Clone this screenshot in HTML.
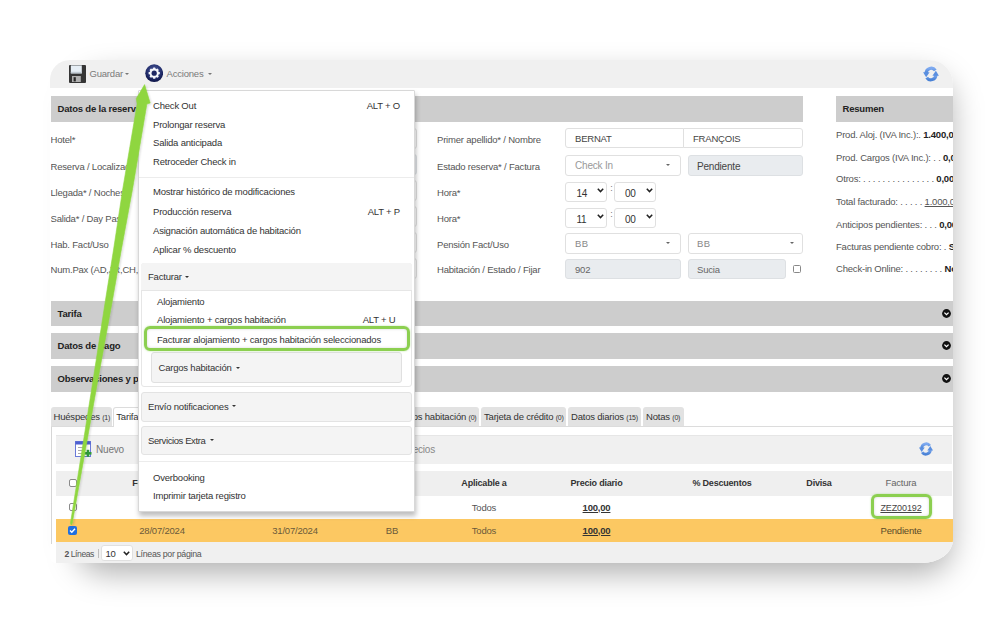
<!DOCTYPE html><html><head><meta charset="utf-8"><style>
*{margin:0;padding:0;box-sizing:border-box}
html,body{width:1000px;height:644px;overflow:hidden;background:#fff;font-family:"Liberation Sans",sans-serif;}
.t{position:absolute;white-space:nowrap;font-size:9.5px;line-height:12px;color:#3a3a3a;letter-spacing:-0.2px}
.r{position:absolute}
.b{font-weight:bold;color:#222}
.g{color:#8a8a8a}
.inp{border:1px solid #e0e0e0;border-radius:3px;background:#fff}
.dis{background:#e9ecef;border-color:#dde0e3}
.hdr{background:#cdcdcd}
.menu{background:#fff;border:1px solid #d8d8d8;border-radius:1px;box-shadow:1px 4px 5px rgba(0,0,0,.26)}
.sec{background:#f4f4f4;border:1px solid #e3e3e3;border-radius:3px}
.cb{border:1px solid #8a8a8a;border-radius:2px;background:#fff}
</style></head><body>
<div class="r" style="left:76px;top:75px;width:876px;height:499px;background:rgba(0,0,0,0.3);filter:blur(15px);border-radius:30px"></div>
<div class="r" style="left:50px;top:60px;width:903px;height:503px;background:#fff;border-radius:20px 24px 31px 6px / 20px 24px 23px 6px;overflow:hidden">
</div>
<div class="r" style="left:50px;top:60px;width:903px;height:503px;border-radius:20px 24px 31px 6px / 20px 24px 23px 6px;overflow:hidden">
<div class="r" style="left:-50px;top:-60px;width:1000px;height:644px">
<div class="r " style="left:50.0px;top:58.0px;width:903.0px;height:30.4px;background:#f0f0f0"></div>
<svg class="r" style="left:69px;top:64.8px" width="17" height="18" viewBox="0 0 17 18">
<rect x="0" y="0" width="17" height="18" rx="1" fill="#353535"/>
<rect x="1.8" y="0.4" width="11" height="8" fill="#e6eef5"/>
<rect x="1.8" y="6.8" width="11" height="1.6" fill="#c2ccd4"/>
<rect x="3" y="11" width="8.8" height="6" fill="#b0b0b0"/>
<rect x="4.6" y="12.2" width="2.2" height="4.2" fill="#262626"/>
</svg>
<div class="t g" style="top:67.5px;left:89.5px;color:#7a7a7a">Guardar</div>
<div class="r" style="left:124.5px;top:72.5px;width:0;height:0;border-left:2px solid transparent;border-right:2px solid transparent;border-top:2.5px solid #777"></div>
<svg class="r" style="left:144.5px;top:64.2px" width="18.4" height="18.4" viewBox="0 0 19 19">
<defs><radialGradient id="gg" cx="50%" cy="35%" r="65%"><stop offset="0" stop-color="#4a5796"/><stop offset=".6" stop-color="#263271"/><stop offset="1" stop-color="#0b1245"/></radialGradient></defs>
<circle cx="9.5" cy="9.5" r="9.2" fill="url(#gg)"/>
<g fill="#f4f6fb"><circle cx="9.5" cy="9.5" r="4.8"/>
<g id="tooth"><rect x="8.3" y="3.7" width="2.4" height="11.6" rx=".6"/></g>
<use href="#tooth" transform="rotate(45 9.5 9.5)"/><use href="#tooth" transform="rotate(90 9.5 9.5)"/><use href="#tooth" transform="rotate(135 9.5 9.5)"/></g>
<circle cx="9.5" cy="9.5" r="2.7" fill="#1d2763"/>
</svg>
<div class="t g" style="top:67.5px;left:166.5px;color:#7a7a7a">Acciones</div>
<div class="r" style="left:207.5px;top:72.5px;width:0;height:0;border-left:2px solid transparent;border-right:2px solid transparent;border-top:2.5px solid #777"></div>
<svg class="r" style="left:921.5px;top:64.5px" width="18" height="18" viewBox="0 0 20 20">
<defs><linearGradient id="rg930" x1="0" y1="0" x2="0" y2="1"><stop offset="0" stop-color="#7eaaf0"/><stop offset="1" stop-color="#4a82d6"/></linearGradient></defs>
<g fill="none" stroke="url(#rg930)" stroke-width="3.6">
<path d="M4.6 9.2 A5.6 5.6 0 0 1 14.8 6.0"/>
<path d="M15.4 10.8 A5.6 5.6 0 0 1 5.2 14.0"/></g>
<path d="M1.2 8.0 L8.4 8.0 L4.6 13.6 Z" fill="#5a8fe0"/>
<path d="M18.8 12.0 L11.6 12.0 L15.4 6.4 Z" fill="#5a8fe0"/>
</svg>
<div class="r hdr" style="left:51.0px;top:96.0px;width:752.0px;height:25.5px;"></div>
<div class="t b" style="top:103.0px;left:57.5px;">Datos de la reserva</div>
<div class="r hdr" style="left:836.0px;top:96.0px;width:117.0px;height:25.5px;"></div>
<div class="t b" style="top:103.0px;left:842.5px;">Resumen</div>
<div class="t " style="top:134.3px;left:50.5px;width:77px;overflow:hidden;color:#555">Hotel*</div>
<div class="t " style="top:160.7px;left:50.5px;width:77px;overflow:hidden;color:#555">Reserva / Localizador</div>
<div class="t " style="top:187.0px;left:50.5px;width:77px;overflow:hidden;color:#555">Llegada* / Noches</div>
<div class="t " style="top:212.5px;left:50.5px;width:77px;overflow:hidden;color:#555">Salida* / Day Pass</div>
<div class="t " style="top:239.0px;left:50.5px;width:77px;overflow:hidden;color:#555">Hab. Fact/Uso</div>
<div class="t " style="top:264.4px;left:50.5px;width:88px;overflow:hidden;color:#555">Num.Pax (AD,JR,CH,BB)</div>
<div class="r inp" style="left:140.0px;top:128.0px;width:276.5px;height:20.5px;"></div>
<div class="r inp dis" style="left:140.0px;top:154.0px;width:276.5px;height:20.5px;"></div>
<div class="r inp" style="left:140.0px;top:180.0px;width:276.5px;height:20.5px;"></div>
<div class="r inp" style="left:140.0px;top:206.0px;width:276.5px;height:20.5px;"></div>
<div class="r inp" style="left:140.0px;top:232.0px;width:276.5px;height:20.5px;"></div>
<div class="r inp" style="left:140.0px;top:258.0px;width:276.5px;height:20.5px;"></div>
<div class="t " style="top:134.3px;left:437.0px;color:#555">Primer apellido* / Nombre</div>
<div class="t " style="top:160.7px;left:437.0px;color:#555">Estado reserva* / Factura</div>
<div class="t " style="top:187.0px;left:437.0px;color:#555">Hora*</div>
<div class="t " style="top:212.5px;left:437.0px;color:#555">Hora*</div>
<div class="t " style="top:239.0px;left:437.0px;color:#555">Pensión Fact/Uso</div>
<div class="t " style="top:264.4px;left:437.0px;color:#555">Habitación / Estado / Fijar</div>
<div class="r inp" style="left:565.0px;top:128.3px;width:119.0px;height:20.0px;border-radius:3px 0 0 3px"></div>
<div class="r inp" style="left:683.0px;top:128.3px;width:120.0px;height:20.0px;border-radius:0 3px 3px 0"></div>
<div class="t " style="top:132.5px;left:575.0px;color:#444">BERNAT</div>
<div class="t " style="top:132.5px;left:693.0px;color:#444">FRANÇOIS</div>
<div class="r inp" style="left:565.0px;top:154.5px;width:115.5px;height:21.0px;"></div>
<div class="t " style="top:160.2px;left:575.0px;color:#999;font-size:10px">Check In</div>
<div class="r" style="left:666.0px;top:164.2px;width:0;height:0;border-left:2.7px solid transparent;border-right:2.7px solid transparent;border-top:2.7px solid #666"></div>
<div class="r inp dis" style="left:687.5px;top:154.5px;width:115.5px;height:21.0px;"></div>
<div class="t " style="top:160.8px;left:697.0px;color:#444;font-size:10px">Pendiente</div>
<div class="r inp" style="left:565.0px;top:181.5px;width:41.5px;height:20.0px;"></div>
<div class="r inp" style="left:614.0px;top:181.5px;width:41.5px;height:20.0px;"></div>
<svg class="r" style="left:596.5px;top:188.3px" width="7" height="5" viewBox="0 0 7 5"><path d="M0.8 0.8 L3.5 3.6 L6.2 0.8" fill="none" stroke="#222" stroke-width="1.5"/></svg>
<svg class="r" style="left:645.5px;top:188.3px" width="7" height="5" viewBox="0 0 7 5"><path d="M0.8 0.8 L3.5 3.6 L6.2 0.8" fill="none" stroke="#222" stroke-width="1.5"/></svg>
<div class="t " style="top:182.0px;left:610.2px;color:#777;font-size:9px">:</div>
<div class="r inp" style="left:565.0px;top:207.5px;width:41.5px;height:20.0px;"></div>
<div class="r inp" style="left:614.0px;top:207.5px;width:41.5px;height:20.0px;"></div>
<svg class="r" style="left:596.5px;top:214.3px" width="7" height="5" viewBox="0 0 7 5"><path d="M0.8 0.8 L3.5 3.6 L6.2 0.8" fill="none" stroke="#222" stroke-width="1.5"/></svg>
<svg class="r" style="left:645.5px;top:214.3px" width="7" height="5" viewBox="0 0 7 5"><path d="M0.8 0.8 L3.5 3.6 L6.2 0.8" fill="none" stroke="#222" stroke-width="1.5"/></svg>
<div class="t " style="top:208.0px;left:610.2px;color:#777;font-size:9px">:</div>
<div class="t " style="top:188.2px;left:576.5px;color:#333;font-size:10px">14</div>
<div class="t " style="top:188.2px;left:625.0px;color:#333;font-size:10px">00</div>
<div class="t " style="top:214.2px;left:576.5px;color:#333;font-size:10px">11</div>
<div class="t " style="top:214.2px;left:625.0px;color:#333;font-size:10px">00</div>
<div class="r inp" style="left:565.0px;top:233.0px;width:115.5px;height:20.5px;"></div>
<div class="t " style="top:237.8px;left:575.0px;color:#888;letter-spacing:0.5px">BB</div>
<div class="r" style="left:666.0px;top:242.0px;width:0;height:0;border-left:2.7px solid transparent;border-right:2.7px solid transparent;border-top:2.7px solid #666"></div>
<div class="r inp" style="left:687.5px;top:233.0px;width:115.5px;height:20.5px;"></div>
<div class="t " style="top:237.8px;left:697.0px;color:#888;letter-spacing:0.5px">BB</div>
<div class="r" style="left:790.0px;top:242.0px;width:0;height:0;border-left:2.7px solid transparent;border-right:2.7px solid transparent;border-top:2.7px solid #666"></div>
<div class="r inp dis" style="left:565.0px;top:259.0px;width:115.5px;height:20.0px;"></div>
<div class="t " style="top:263.5px;left:575.0px;color:#666">902</div>
<div class="r inp dis" style="left:687.5px;top:259.0px;width:98.5px;height:20.0px;"></div>
<div class="t " style="top:263.5px;left:697.0px;color:#666">Sucia</div>
<div class="r " style="left:792.5px;top:265.0px;width:8.0px;height:8.0px;border:1px solid #888;border-radius:1.5px;background:#fff"></div>
<div class="t " style="top:128.7px;left:836.0px;color:#555">Prod. Aloj. (IVA Inc.):. <b style="color:#222">1.400,00</b></div>
<div class="t " style="top:151.8px;left:836.0px;color:#555">Prod. Cargos (IVA Inc.): . . <b style="color:#222">0,00</b></div>
<div class="t " style="top:172.9px;left:836.0px;color:#555">Otros: . . . . . . . . . . . . . . . <b style="color:#222">0,00</b></div>
<div class="t " style="top:196.4px;left:836.0px;color:#555">Total facturado: . . . . .  <u>1.000,00</u></div>
<div class="t " style="top:218.7px;left:836.0px;color:#555">Anticipos pendientes: . . . <b style="color:#222">0,00</b></div>
<div class="t " style="top:240.5px;left:836.0px;color:#555">Facturas pendiente cobro: .  <b style="color:#222">Sí</b></div>
<div class="t " style="top:262.8px;left:836.0px;color:#555">Check-in Online: . . . . . . . . <b style="color:#222">No</b></div>
<div class="r hdr" style="left:51.0px;top:301.0px;width:902.0px;height:25.0px;"></div>
<div class="t b" style="top:307.5px;left:57.5px;">Tarifa</div>
<svg class="r" style="left:942.2px;top:308.5px" width="9" height="9" viewBox="0 0 9 9"><circle cx="4.5" cy="4.5" r="4.4" fill="#111"/><path d="M2.4 3.6 L4.5 5.6 L6.6 3.6" fill="none" stroke="#fff" stroke-width="1.3"/></svg>
<div class="r hdr" style="left:51.0px;top:333.0px;width:902.0px;height:25.5px;"></div>
<div class="t b" style="top:339.8px;left:57.5px;">Datos de pago</div>
<svg class="r" style="left:942.2px;top:340.8px" width="9" height="9" viewBox="0 0 9 9"><circle cx="4.5" cy="4.5" r="4.4" fill="#111"/><path d="M2.4 3.6 L4.5 5.6 L6.6 3.6" fill="none" stroke="#fff" stroke-width="1.3"/></svg>
<div class="r hdr" style="left:51.0px;top:366.0px;width:902.0px;height:25.5px;"></div>
<div class="t b" style="top:372.8px;left:57.5px;">Observaciones y preferencias</div>
<svg class="r" style="left:942.2px;top:373.8px" width="9" height="9" viewBox="0 0 9 9"><circle cx="4.5" cy="4.5" r="4.4" fill="#111"/><path d="M2.4 3.6 L4.5 5.6 L6.6 3.6" fill="none" stroke="#fff" stroke-width="1.3"/></svg>
<div class="r " style="left:51.0px;top:426.0px;width:902.0px;height:1.0px;background:#dcdcdc"></div>
<div class="r " style="left:50.5px;top:406.5px;width:61.5px;height:19.5px;background:#e2e2e2;border-radius:3px 3px 0 0"></div>
<div class="t " style="top:411.0px;left:53.5px;color:#333;font-size:9.5px">Huéspedes <span style="font-size:7px">(1)</span></div>
<div class="r " style="left:113.3px;top:406.5px;width:76.7px;height:20.5px;background:#fff;border:1px solid #dcdcdc;border-bottom:none;border-radius:3px 3px 0 0"></div>
<div class="t " style="top:411.0px;left:116.3px;color:#333;font-size:9.5px">Tarifas <span style="font-size:7px">(2)</span></div>
<div class="r " style="left:192.0px;top:406.5px;width:286.7px;height:19.5px;background:#e2e2e2;border-radius:3px 3px 0 0"></div>
<div class="t " style="top:411.0px;right:523.5px;color:#333;font-size:9.5px">Cargos habitación <span style="font-size:7px">(0)</span></div>
<div class="r " style="left:481.0px;top:406.5px;width:85.0px;height:19.5px;background:#e2e2e2;border-radius:3px 3px 0 0"></div>
<div class="t " style="top:411.0px;left:484.0px;color:#333;font-size:9.5px">Tarjeta de crédito <span style="font-size:7px">(0)</span></div>
<div class="r " style="left:568.0px;top:406.5px;width:73.0px;height:19.5px;background:#e2e2e2;border-radius:3px 3px 0 0"></div>
<div class="t " style="top:411.0px;left:571.0px;color:#333;font-size:9.5px">Datos diarios <span style="font-size:7px">(15)</span></div>
<div class="r " style="left:643.0px;top:406.5px;width:41.0px;height:19.5px;background:#e2e2e2;border-radius:3px 3px 0 0"></div>
<div class="t " style="top:411.0px;left:646.0px;color:#333;font-size:9.5px">Notas <span style="font-size:7px">(0)</span></div>
<div class="r " style="left:50.5px;top:427.0px;width:1.0px;height:117.0px;background:#d6d6d6"></div>
<div class="r " style="left:56.0px;top:434.7px;width:896.0px;height:29.3px;background:#f0f0f0;border-top:1px solid #e6e6e6"></div>
<svg class="r" style="left:74.5px;top:440.5px" width="17" height="17" viewBox="0 0 17 17">
<rect x="0.5" y="0.5" width="15" height="15" fill="#fff" stroke="#6a7ad8" stroke-width="1"/>
<rect x="0.5" y="0.5" width="15" height="3" fill="#4d5fd0"/>
<rect x="3" y="6" width="7" height="1" fill="#aaa"/><rect x="3" y="9" width="7" height="1" fill="#aaa"/><rect x="3" y="12" width="7" height="1" fill="#aaa"/>
<rect x="9.5" y="11" width="7" height="2.6" fill="#2f9a3a"/><rect x="11.7" y="8.8" width="2.6" height="7" fill="#2f9a3a"/>
</svg>
<div class="t " style="top:443.5px;left:96.0px;color:#777;font-size:10px">Nuevo</div>
<div class="t " style="top:443.5px;right:565.0px;color:#888;font-size:10px">Modificar precios</div>
<svg class="r" style="left:917.5px;top:441.2px" width="16" height="16" viewBox="0 0 20 20">
<defs><linearGradient id="rg925" x1="0" y1="0" x2="0" y2="1"><stop offset="0" stop-color="#7eaaf0"/><stop offset="1" stop-color="#4a82d6"/></linearGradient></defs>
<g fill="none" stroke="url(#rg925)" stroke-width="3.6">
<path d="M4.6 9.2 A5.6 5.6 0 0 1 14.8 6.0"/>
<path d="M15.4 10.8 A5.6 5.6 0 0 1 5.2 14.0"/></g>
<path d="M1.2 8.0 L8.4 8.0 L4.6 13.6 Z" fill="#5a8fe0"/>
<path d="M18.8 12.0 L11.6 12.0 L15.4 6.4 Z" fill="#5a8fe0"/>
</svg>
<div class="r " style="left:56.0px;top:471.0px;width:896.0px;height:24.5px;background:#efefef"></div>
<div class="r cb" style="left:68.5px;top:478.5px;width:8.0px;height:8.0px;"></div>
<div class="t b" style="top:477.0px;left:58.5px;width:200px;text-align:center;font-size:9px;color:#333">Fecha desde</div>
<div class="t b" style="top:477.0px;left:195.0px;width:200px;text-align:center;font-size:9px;color:#333">Fecha hasta</div>
<div class="t b" style="top:477.0px;left:292.0px;width:200px;text-align:center;font-size:9px;color:#333">Pensión</div>
<div class="t b" style="top:477.0px;left:384.0px;width:200px;text-align:center;font-size:9px;color:#333">Aplicable a</div>
<div class="t b" style="top:477.0px;left:496.5px;width:200px;text-align:center;font-size:9px;color:#333">Precio diario</div>
<div class="t b" style="top:477.0px;left:622.0px;width:200px;text-align:center;font-size:9px;color:#333">% Descuentos</div>
<div class="t b" style="top:477.0px;left:719.0px;width:200px;text-align:center;font-size:9px;color:#333">Divisa</div>
<div class="t " style="top:477.0px;left:801.0px;width:200px;text-align:center;font-size:9.5px;color:#666">Factura</div>
<div class="r cb" style="left:68.5px;top:502.5px;width:8.0px;height:8.0px;"></div>
<div class="t " style="top:501.5px;left:62.0px;width:200px;text-align:center;color:#555">28/07/2024</div>
<div class="t " style="top:501.5px;left:195.0px;width:200px;text-align:center;color:#555">31/07/2024</div>
<div class="t " style="top:501.5px;left:292.0px;width:200px;text-align:center;color:#555">BB</div>
<div class="t " style="top:501.5px;left:384.0px;width:200px;text-align:center;color:#555">Todos</div>
<div class="t b" style="top:501.5px;left:496.5px;width:200px;text-align:center;color:#333"><u>100,00</u></div>
<div class="t " style="top:501.5px;left:801.0px;width:200px;text-align:center;color:#444;font-size:9px;letter-spacing:-0.1px"><u>ZEZ00192</u></div>
<div class="r " style="left:56.0px;top:519.0px;width:897.0px;height:23.0px;background:#fcc862"></div>
<div class="r " style="left:68.0px;top:525.5px;width:9.0px;height:9.0px;background:#1f6fe0;border-radius:2px"></div>
<svg class="r" style="left:68px;top:525.5px" width="9" height="9" viewBox="0 0 9 9"><path d="M2 4.6 L3.8 6.3 L7 2.8" fill="none" stroke="#fff" stroke-width="1.4"/></svg>
<div class="t " style="top:524.5px;left:62.0px;width:200px;text-align:center;color:#6b5a3a">28/07/2024</div>
<div class="t " style="top:524.5px;left:195.0px;width:200px;text-align:center;color:#6b5a3a">31/07/2024</div>
<div class="t " style="top:524.5px;left:292.0px;width:200px;text-align:center;color:#6b5a3a">BB</div>
<div class="t " style="top:524.5px;left:384.0px;width:200px;text-align:center;color:#6b5a3a">Todos</div>
<div class="t b" style="top:524.5px;left:496.5px;width:200px;text-align:center;color:#333"><u>100,00</u></div>
<div class="t " style="top:524.5px;left:801.0px;width:200px;text-align:center;color:#5a4a2a">Pendiente</div>
<div class="r " style="left:56.0px;top:542.0px;width:897.0px;height:21.5px;background:#f0f0f0"></div>
<div class="t " style="top:547.5px;left:64.5px;color:#555;font-size:8.6px;letter-spacing:-0.45px"><b>2</b> Líneas</div>
<div class="r " style="left:97.5px;top:549.0px;width:1.0px;height:9.0px;background:#bdbdbd"></div>
<div class="r inp" style="left:101.0px;top:545.0px;width:32.0px;height:16.0px;border-radius:3px"></div>
<div class="t " style="top:547.5px;left:105.5px;color:#333;font-size:9.5px">10</div>
<svg class="r" style="left:123.0px;top:550.5px" width="7" height="5" viewBox="0 0 7 5"><path d="M0.8 0.8 L3.5 3.6 L6.2 0.8" fill="none" stroke="#222" stroke-width="1.5"/></svg>
<div class="t " style="top:547.5px;left:136.0px;color:#555;font-size:8.8px;letter-spacing:-0.3px">Líneas por página</div>
</div></div>
<div class="r menu" style="left:137.5px;top:90.0px;width:277.5px;height:421.5px;"></div>
<div class="t " style="top:100.0px;left:153.0px;color:#333">Check Out</div>
<div class="t " style="top:100.0px;right:600.0px;color:#333">ALT + O</div>
<div class="t " style="top:118.5px;left:153.0px;color:#333">Prolongar reserva</div>
<div class="t " style="top:137.0px;left:153.0px;color:#333">Salida anticipada</div>
<div class="t " style="top:155.6px;left:153.0px;color:#333">Retroceder Check in</div>
<div class="t " style="top:186.0px;left:153.0px;color:#333">Mostrar histórico de modificaciones</div>
<div class="t " style="top:206.0px;left:153.0px;color:#333">Producción reserva</div>
<div class="t " style="top:206.0px;right:600.0px;color:#333">ALT + P</div>
<div class="t " style="top:225.0px;left:153.0px;color:#333">Asignación automática de habitación</div>
<div class="t " style="top:244.0px;left:153.0px;color:#333">Aplicar % descuento</div>
<div class="r " style="left:139.0px;top:176.5px;width:275.0px;height:1.0px;background:#ececec"></div>
<div class="r " style="left:141.0px;top:262.5px;width:271.0px;height:124.5px;background:#fff;border:1px solid #e6e6e6;border-radius:3px"></div>
<div class="r " style="left:141.0px;top:262.5px;width:271.0px;height:28.5px;background:#f4f4f4;border-bottom:1px solid #e6e6e6;border-radius:3px 3px 0 0"></div>
<div class="t " style="top:270.6px;left:148.0px;color:#333">Facturar</div>
<div class="r" style="left:185.0px;top:276.0px;width:0;height:0;border-left:2.2px solid transparent;border-right:2.2px solid transparent;border-top:2.6px solid #333"></div>
<div class="t " style="top:295.5px;left:157.0px;color:#333">Alojamiento</div>
<div class="t " style="top:314.0px;left:157.0px;color:#333">Alojamiento + cargos habitación</div>
<div class="t " style="top:314.0px;right:604.5px;color:#333">ALT + U</div>
<div class="t " style="top:333.7px;left:157.0px;color:#333">Facturar alojamiento + cargos habitación seleccionados</div>
<div class="r " style="left:151.0px;top:351.7px;width:251.0px;height:31.8px;background:#f4f4f4;border:1px solid #e0e0e0;border-radius:3px"></div>
<div class="t " style="top:362.0px;left:158.5px;color:#333">Cargos habitación</div>
<div class="r" style="left:235.5px;top:366.8px;width:0;height:0;border-left:2.2px solid transparent;border-right:2.2px solid transparent;border-top:2.6px solid #333"></div>
<div class="r sec" style="left:141.0px;top:391.5px;width:271.0px;height:30.5px;"></div>
<div class="t " style="top:400.6px;left:148.0px;color:#333">Envío notificaciones</div>
<div class="r" style="left:232.0px;top:405.3px;width:0;height:0;border-left:2.2px solid transparent;border-right:2.2px solid transparent;border-top:2.6px solid #333"></div>
<div class="r sec" style="left:141.0px;top:426.4px;width:271.0px;height:29.1px;"></div>
<div class="t " style="top:434.5px;left:148.0px;color:#333;letter-spacing:-0.4px">Servicios Extra</div>
<div class="r" style="left:210.3px;top:439.3px;width:0;height:0;border-left:2.2px solid transparent;border-right:2.2px solid transparent;border-top:2.6px solid #333"></div>
<div class="r " style="left:139.0px;top:461.0px;width:275.0px;height:1.0px;background:#ececec"></div>
<div class="t " style="top:472.0px;left:153.0px;color:#333">Overbooking</div>
<div class="t " style="top:490.0px;left:153.0px;color:#333">Imprimir tarjeta registro</div>
<div class="r" style="left:144px;top:326.3px;width:265.5px;height:24.8px;border:3.6px solid #8ccf50;border-radius:6px;box-shadow:0 0 2px rgba(120,200,70,.55), inset 0 0 3px rgba(0,0,0,.16)"></div>
<div class="r" style="left:870.5px;top:494px;width:61px;height:25.2px;border:3.6px solid #8ccf50;border-radius:6px;box-shadow:0 0 2px rgba(120,200,70,.55), inset 0 0 3px rgba(0,0,0,.16)"></div>
<svg class="r" style="left:0;top:0" width="1000" height="644"><defs><filter id="ash" x="-20%" y="-5%" width="140%" height="110%"><feGaussianBlur in="SourceAlpha" stdDeviation="1.2"/><feOffset dx="1.2" dy="0.5" result="o"/><feComponentTransfer><feFuncA type="linear" slope="0.16"/></feComponentTransfer><feMerge><feMergeNode/><feMergeNode in="SourceGraphic"/></feMerge></filter></defs><polygon points="144.6,84.6 150.2,103.0 146.9,104.0 132.4,190.0 121.3,250.0 112.5,300.0 97.9,380.0 89.0,430.0 72.3,523.0 71.2,525.0 70.5,523.0 85.2,430.0 93.1,380.0 105.5,300.0 113.5,250.0 122.6,190.0 137.1,104.0 136.3,98.5" fill="#8fd63f" stroke="#8fd63f" stroke-width="0.6" stroke-linejoin="round" filter="url(#ash)"/></svg>
</body></html>
